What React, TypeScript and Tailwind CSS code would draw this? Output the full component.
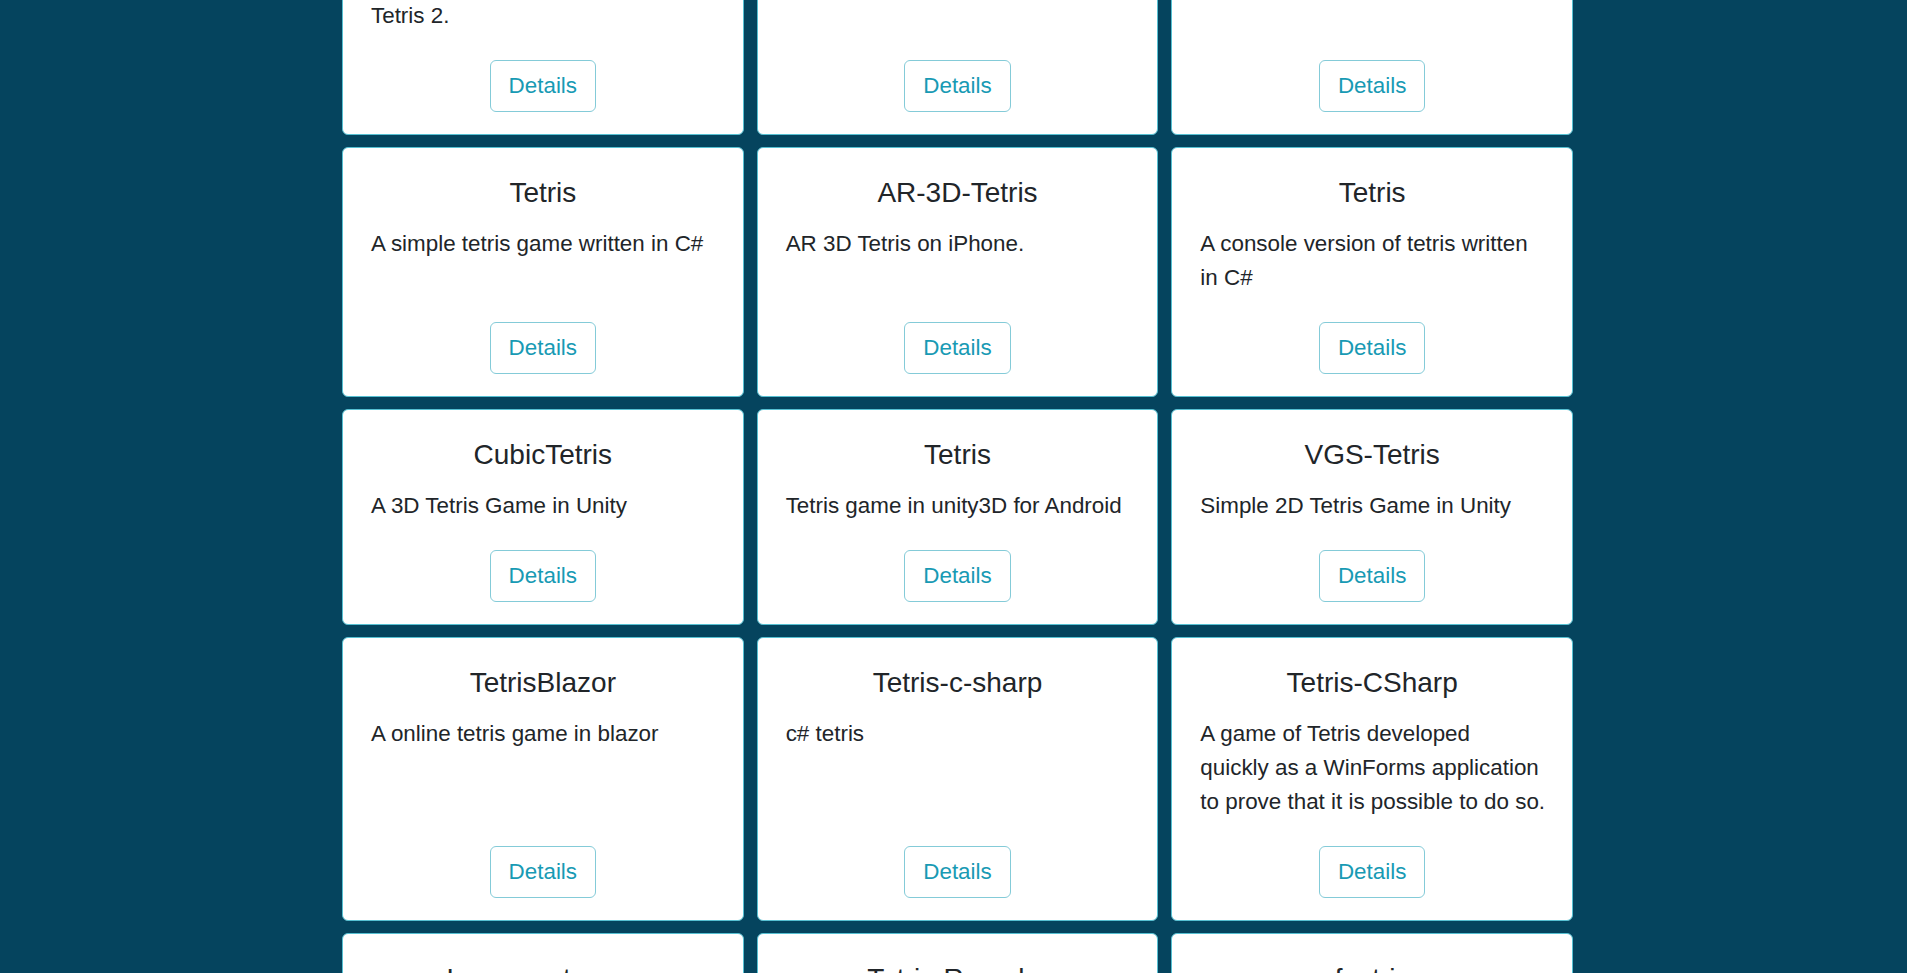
interface Project {
  name: string
  lines: string[]
}

// descriptions are kept as explicit lines so the wrapping matches the reference
const projects: Project[] = [
  { name: "Tetris-2", lines: ["A remake of the classic game", "Tetris 2."] },
  { name: "Tetris", lines: ["Classic Tetris in C#"] },
  { name: "Tetris-Console", lines: ["Tetris for the console"] },

  { name: "Tetris", lines: ["A simple tetris game written in C#"] },
  { name: "AR-3D-Tetris", lines: ["AR 3D Tetris on iPhone."] },
  { name: "Tetris", lines: ["A console version of tetris written", "in C#"] },

  { name: "CubicTetris", lines: ["A 3D Tetris Game in Unity"] },
  { name: "Tetris", lines: ["Tetris game in unity3D for Android"] },
  { name: "VGS-Tetris", lines: ["Simple 2D Tetris Game in Unity"] },

  { name: "TetrisBlazor", lines: ["A online tetris game in blazor"] },
  { name: "Tetris-c-sharp", lines: ["c# tetris"] },
  {
    name: "Tetris-CSharp",
    lines: ["A game of Tetris developed", "quickly as a WinForms application", "to prove that it is possible to do so."],
  },

  { name: "Incrementverse", lines: ["An incremental tetris game"] },
  { name: "Tetris-Remake", lines: ["Tetris remake in C#"] },
  { name: "fsetris", lines: ["Tetris in F#"] },
]

function ProjectCard({ project }: { project: Project }) {
  return (
    <div className="flex flex-col bg-white border border-[#56c0d2] rounded-md pl-[28px] pr-[26px] pt-[28px] pb-[22px]">
      <h2 className="text-center text-[28px] leading-[33.6px] font-normal text-[#212529] mb-[17px] pr-[2px] whitespace-nowrap">
        {project.name}
      </h2>
      <div className="text-[22.4px] leading-[34px] text-[#212529]">
        {project.lines.map((line, i) => (
          <div key={i} className="whitespace-nowrap">
            {line}
          </div>
        ))}
      </div>
      <div className="mt-auto pt-[27px] flex justify-center pr-[2px]">
        <button className="px-[18px] py-[8px] text-[22.4px] leading-[34px] text-[#189ab4] border border-[#84cbd8] rounded-md bg-white">
          Details
        </button>
      </div>
    </div>
  )
}

export default function App() {
  return (
    <div
      className="min-h-screen bg-[#05445e] overflow-hidden flex flex-col"
      style={{ fontFamily: '"Liberation Sans", Arial, sans-serif' }}
    >
      <div className="grid grid-cols-3 gap-x-[13px] gap-y-[12.5px] w-[1231px] ml-[342px] -mt-[115px] pb-8">
        {projects.map((p, i) => (
          <ProjectCard key={i} project={p} />
        ))}
      </div>
    </div>
  )
}
